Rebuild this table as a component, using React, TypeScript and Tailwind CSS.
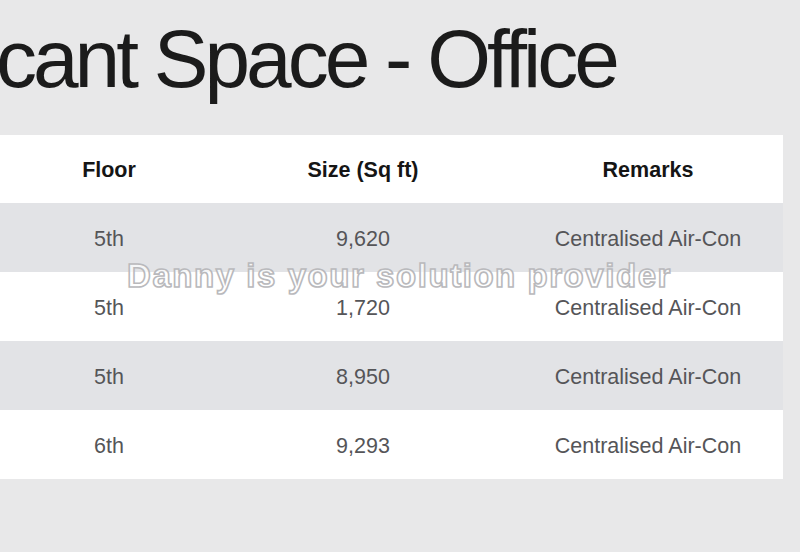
const rows = [
  { floor: "5th", size: "9,620", remarks: "Centralised Air-Con" },
  { floor: "5th", size: "1,720", remarks: "Centralised Air-Con" },
  { floor: "5th", size: "8,950", remarks: "Centralised Air-Con" },
  { floor: "6th", size: "9,293", remarks: "Centralised Air-Con" },
];

const App = () => {
  return (
    <div className="w-[800px] h-[552px] overflow-hidden bg-[#e8e8e9] font-['Liberation_Sans',Arial,sans-serif]">
      <h1 className="pt-[18px] ml-[-4px] text-[82px] leading-none tracking-[-4px] text-[#1b1b1b] whitespace-nowrap">
        cant Space - Office
      </h1>

      <div className="relative mt-[35px] w-[783px]">
        <div className="grid grid-cols-[218px_290px_1fr] h-[68px] pt-[3px] items-center bg-white text-[21.5px] font-bold text-[#151515]">
          <div className="text-center">Floor</div>
          <div className="text-center">Size (Sq ft)</div>
          <div className="text-center pl-[5px]">Remarks</div>
        </div>
        {rows.map((r, i) => (
          <div
            key={i}
            className={
              "grid grid-cols-[218px_290px_1fr] h-[69px] pt-[4px] items-center text-[21.5px] text-[#555558] " +
              (i % 2 === 0 ? "bg-[#e2e3e6]" : "bg-white")
            }
          >
            <div className="text-center">{r.floor}</div>
            <div className="text-center">{r.size}</div>
            <div className="text-center pl-[5px]">{r.remarks}</div>
          </div>
        ))}

        {/* watermark over the table */}
        <div className="absolute left-[127px] top-[124px] text-[33px] font-bold leading-none tracking-[1.55px] text-white/70 [-webkit-text-stroke:1.6px_#b9b9bc] whitespace-nowrap pointer-events-none">
          Danny is your solution provider
        </div>
      </div>
    </div>
  );
};

export default App;
